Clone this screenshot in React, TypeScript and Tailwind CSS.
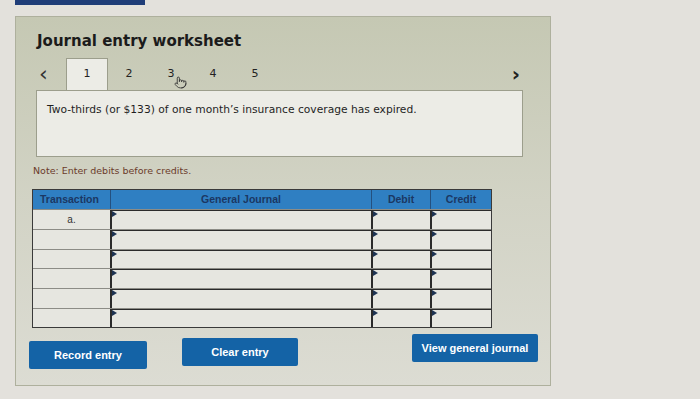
import { Pointer } from "lucide-react";

const rows = ["a.", "", "", "", "", ""];

function Marker() {
  return (
    <span className="absolute left-0 top-0 h-0 w-0 border-l-[5px] border-t-[3px] border-b-[3px] border-l-[#1d3352] border-t-transparent border-b-transparent" />
  );
}

export default function App() {
  return (
    <div className="relative h-[399px] w-[700px] overflow-hidden bg-[#e3e1dc] font-['DejaVu_Sans',sans-serif]">
      {/* top strip */}
      <div className="ml-[15px] h-[5px] w-[130px] bg-[#1f3d78]" />

      {/* worksheet panel */}
      <div className="ml-[15px] mt-[11px] h-[370px] w-[536px] border border-[#aeb09d] bg-gradient-to-b from-[#c5c8b3] via-[#d2d3c5] to-[#dcdcd3] pt-[15px]">
        <h1 className="ml-[21px] text-[15px] font-bold leading-[18px] text-[#1b1b1b]">
          Journal entry worksheet
        </h1>

        {/* tabs */}
        <div className="ml-[20px] mt-[8px] flex h-[32px] w-[486px] items-center text-[11px] text-[#222]">
          <span className="w-[30px] pl-[3px] text-[22px] leading-none text-[#333]">‹</span>
          <div className="flex h-full w-[42px] items-center justify-center border border-b-0 border-[#9c9e8c] bg-[#ecece6]">1</div>
          <div className="flex h-full w-[42px] items-center justify-center">2</div>
          <div className="relative flex h-full w-[42px] items-center justify-center">
            3
            <Pointer className="absolute left-[24px] top-[18px] h-[13px] w-[13px] text-[#333]" strokeWidth={1.6} />
          </div>
          <div className="flex h-full w-[42px] items-center justify-center">4</div>
          <div className="flex h-full w-[42px] items-center justify-center">5</div>
          <span className="ml-auto mr-[2px] text-[20px] font-bold leading-none text-[#222]">›</span>
        </div>

        <div className="ml-[20px] h-[67px] w-[487px] border border-[#9c9e8c] bg-[#ecece6] px-[10px] pt-[11px] text-[10.7px] text-[#1f1f1f]">
          Two-thirds (or $133) of one month’s insurance coverage has expired.
        </div>

        <p className="ml-[17px] mt-[7px] text-[9.5px] text-[#6b3b2b]">
          Note: Enter debits before credits.
        </p>

        {/* table */}
        <div className="ml-[16px] mt-[11px] w-[460px] border border-[#3a3a3a] font-['Liberation_Sans',sans-serif]">
          <div className="flex h-[19px] bg-[#2f7fc2] text-[10.5px] font-bold text-[#1b3763]">
            <div className="flex w-[77px] items-center pl-[7px]">Transaction</div>
            <div className="flex w-[261px] items-center justify-center border-l border-[#24507f]">General Journal</div>
            <div className="flex w-[59px] items-center justify-center border-l border-[#24507f]">Debit</div>
            <div className="flex flex-1 items-center justify-center border-l border-[#24507f]">Credit</div>
          </div>
          {rows.map((r, i) => (
            <div key={i} className="flex h-[19.7px] border-t border-[#8c8c86] bg-[#e6e6e0] text-[10px] text-[#333]">
              <div className="flex w-[77px] items-center justify-center">{r}</div>
              <div className="relative w-[261px] border-l-2 border-t border-[#2b2b2b]">
                <Marker />
              </div>
              <div className="relative w-[59px] border-l-2 border-t border-[#2b2b2b]">
                <Marker />
              </div>
              <div className="relative flex-1 border-l-2 border-t border-[#2b2b2b]">
                <Marker />
              </div>
            </div>
          ))}
        </div>

        {/* buttons */}
        <div className="mt-[6px] flex items-start font-['Liberation_Sans',sans-serif] text-[11px] font-bold text-white">
          <button className="ml-[13px] mt-[7px] h-[28px] w-[118px] rounded-[2px] bg-[#1463a6]">Record entry</button>
          <button className="ml-[35px] mt-[4px] h-[28px] w-[116px] rounded-[2px] bg-[#1463a6]">Clear entry</button>
          <button className="ml-[114px] h-[28px] w-[126px] rounded-[2px] bg-[#1463a6]">View general journal</button>
        </div>
      </div>
    </div>
  );
}
